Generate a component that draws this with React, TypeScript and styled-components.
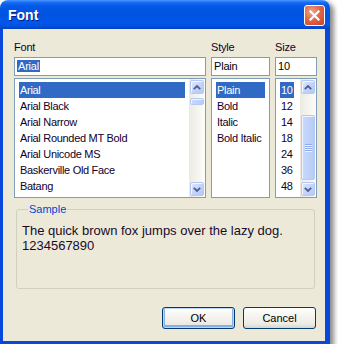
import React from "react";
import styled, { createGlobalStyle } from "styled-components";

const Global = createGlobalStyle`
  html, body { margin: 0; padding: 0; background: #ffffff; }
  body { font-family: "Liberation Sans", Arial, sans-serif; }
  * { box-sizing: border-box; }
`;

const Window = styled.div`
  width: 330px;
  height: 344px;
  display: flex;
  flex-direction: column;
  border-radius: 8px 8px 0 0;
  box-shadow: 3px 3px 5px 1px rgba(0, 0, 0, 0.45);
`;

const TitleBar = styled.div`
  height: 29px;
  flex: none;
  display: flex;
  align-items: center;
  justify-content: space-between;
  padding: 0 5px 0 8px;
  border-radius: 8px 8px 0 0;
  background: linear-gradient(
    to bottom,
    #4a98ff 0%,
    #1a6df5 8%,
    #0459e8 20%,
    #0053e0 50%,
    #0057ea 80%,
    #044ed8 92%,
    #0040c0 100%
  );
`;

const Title = styled.span`
  color: #ffffff;
  font: bold 14px "Liberation Sans", Arial, sans-serif;
  text-shadow: 1px 1px 0 #0a1a8a;
  margin-top: 1px;
`;

const CloseButton = styled.div`
  width: 21px;
  height: 21px;
  border: 1px solid #ffffff;
  border-radius: 3px;
  display: flex;
  align-items: center;
  justify-content: center;
  background: radial-gradient(circle at 35% 30%, #f0a38a 0%, #e2694a 45%, #c4401f 100%);
  margin-top: 1px;
`;

const Frame = styled.div`
  flex: 1;
  display: flex;
  flex-direction: column;
  background: #ece9d8;
  border-style: solid;
  border-color: #0a47dc;
  border-width: 0 5px 3px 3px;
  padding: 12px 8px 12px 11px;
  color: #000;
  font-size: 11px;
`;

const Columns = styled.div`
  display: grid;
  grid-template-columns: 192px 59px 42px;
  column-gap: 5px;
`;

const Column = styled.div`
  display: flex;
  flex-direction: column;
`;

const Label = styled.div`
  height: 16px;
  line-height: 13px;
  font-size: 11px;
  letter-spacing: -0.2px;
  color: #10002a;
`;

const Field = styled.div`
  height: 19px;
  border: 1px solid #7f9db9;
  background: #fff;
  padding: 2px 2px;
  line-height: 13px;
  font-size: 11px;
  letter-spacing: -0.2px;
  white-space: nowrap;
  overflow: hidden;
`;

const Selected = styled.span`
  background: #316ac5;
  color: #fff;
  padding: 0 1px;
`;

const ListBox = styled.div`
  margin-top: 2px;
  height: 120px;
  border: 1px solid #7f9db9;
  background: #fff;
  display: flex;
`;

const Items = styled.div`
  flex: 1;
  min-width: 0;
  padding: 3px 4px 0 4px;
  display: flex;
  flex-direction: column;
`;

const Item = styled.div<{ $sel?: boolean; $fit?: boolean }>`
  height: 16px;
  line-height: 16px;
  padding: 0 1px;
  font-size: 11px;
  letter-spacing: -0.3px;
  white-space: nowrap;
  align-self: ${(p) => (p.$fit ? "flex-start" : "stretch")};
  background: ${(p) => (p.$sel ? "#316ac5" : "transparent")};
  color: ${(p) => (p.$sel ? "#fff" : "#10002a")};
`;

const ScrollBar = styled.div`
  width: 16px;
  flex: none;
  display: flex;
  flex-direction: column;
  align-items: center;
  background: linear-gradient(to right, #eceae2 0%, #f4f3ee 50%, #fdfdfb 100%);
`;

const ScrollBtn = styled.div`
  width: 14px;
  height: 14px;
  margin: 1px 0;
  flex: none;
  border: 1px solid #b5c9f3;
  border-radius: 2px;
  display: flex;
  align-items: center;
  justify-content: center;
  background: linear-gradient(135deg, #dde7fe 0%, #c4d5fd 50%, #b3c8f7 100%);
  box-shadow: inset 1px 1px 0 #f2f6ff;
`;

const Track = styled.div`
  flex: 1;
  width: 100%;
  display: flex;
  flex-direction: column;
  align-items: center;
`;

const Thumb = styled.div<{ $top: number; $h: number }>`
  width: 14px;
  height: ${(p) => p.$h}px;
  margin-top: ${(p) => p.$top}px;
  border: 1px solid #b5c9f3;
  border-radius: 2px;
  background: linear-gradient(to right, #c9d9fd 0%, #c1d3fb 50%, #b6cbf8 100%);
  box-shadow: inset 1px 1px 0 #eef3ff;
  display: flex;
  flex-direction: column;
  align-items: center;
  justify-content: center;
  gap: 1px;
`;

const Grip = styled.div`
  width: 7px;
  height: 1px;
  background: #8cabec;
  box-shadow: 0 1px 0 #eef3ff;
`;

const Group = styled.fieldset`
  margin: 5px 2px 0 2px;
  height: 86px;
  border: 1px solid #d0d0bf;
  border-radius: 3px;
  padding: 7px 5px 0 5px;
  min-width: 0;
`;

const Legend = styled.legend`
  color: #0046d5;
  font-size: 11px;
  padding: 0 1px;
  margin-left: 6px;
  line-height: 13px;
`;

const SampleText = styled.div`
  font: 13px/15px "Liberation Sans", Arial, sans-serif;
  color: #1a0a2a;
`;

const ButtonRow = styled.div`
  margin-top: auto;
  display: flex;
  justify-content: flex-end;
  gap: 8px;
  padding-right: 1px;
`;

const Button = styled.div<{ $default?: boolean }>`
  width: 73px;
  height: 22px;
  border: 1px solid #003c74;
  border-radius: 3px;
  display: flex;
  align-items: center;
  justify-content: center;
  font-size: 11px;
  color: #000;
  background: linear-gradient(to bottom, #ffffff 0%, #f5f4f0 40%, #ecebe5 80%, #d8d3c8 100%);
  box-shadow: ${(p) =>
    p.$default
      ? "inset 0 0 0 1px #bcd4f6, inset 0 -1px 0 2px #89ade4"
      : "inset 0 -1px 0 #dcd8cc"};
`;

const Chevron = ({ down }: { down?: boolean }) => (
  <svg width="8" height="5" viewBox="0 0 8 5">
    <polyline
      points={down ? "0.8,0.8 4,4 7.2,0.8" : "0.8,4.2 4,1 7.2,4.2"}
      fill="none"
      stroke="#4d6185"
      strokeWidth="1.8"
    />
  </svg>
);

const Scroller = ({ top, h, grip }: { top: number; h: number; grip?: boolean }) => (
  <ScrollBar>
    <ScrollBtn>
      <Chevron />
    </ScrollBtn>
    <Track>
      <Thumb $top={top} $h={h}>
        {grip && (
          <>
            <Grip />
            <Grip />
            <Grip />
            <Grip />
          </>
        )}
      </Thumb>
    </Track>
    <ScrollBtn>
      <Chevron down />
    </ScrollBtn>
  </ScrollBar>
);

const fonts = [
  "Arial",
  "Arial Black",
  "Arial Narrow",
  "Arial Rounded MT Bold",
  "Arial Unicode MS",
  "Baskerville Old Face",
  "Batang",
];
const styles = ["Plain", "Bold", "Italic", "Bold Italic"];
const sizes = ["10", "12", "14", "18", "24", "36", "48"];

export default function App() {
  return (
    <>
      <Global />
      <Window>
        <TitleBar>
          <Title>Font</Title>
          <CloseButton>
            <svg width="11" height="11" viewBox="0 0 11 11">
              <path d="M1.5 1.5 L9.5 9.5 M9.5 1.5 L1.5 9.5" stroke="#fff" strokeWidth="2.2" strokeLinecap="square" />
            </svg>
          </CloseButton>
        </TitleBar>
        <Frame>
          <Columns>
            <Column>
              <Label>Font</Label>
              <Field>
                <Selected>Arial</Selected>
              </Field>
              <ListBox>
                <Items>
                  {fonts.map((f, i) => (
                    <Item key={f} $sel={i === 0}>
                      {f}
                    </Item>
                  ))}
                </Items>
                <Scroller top={3} h={7} />
              </ListBox>
            </Column>
            <Column>
              <Label>Style</Label>
              <Field>Plain</Field>
              <ListBox>
                <Items>
                  {styles.map((s, i) => (
                    <Item key={s} $sel={i === 0}>
                      {s}
                    </Item>
                  ))}
                </Items>
              </ListBox>
            </Column>
            <Column>
              <Label>Size</Label>
              <Field>10</Field>
              <ListBox>
                <Items>
                  {sizes.map((s, i) => (
                    <Item key={s} $sel={i === 0} $fit>
                      {s}
                    </Item>
                  ))}
                </Items>
                <Scroller top={20} h={65} grip />
              </ListBox>
            </Column>
          </Columns>
          <Group>
            <Legend>Sample</Legend>
            <SampleText>
              The quick brown fox jumps over the lazy dog.
              <br />
              1234567890
            </SampleText>
          </Group>
          <ButtonRow>
            <Button $default>OK</Button>
            <Button>Cancel</Button>
          </ButtonRow>
        </Frame>
      </Window>
    </>
  );
}
